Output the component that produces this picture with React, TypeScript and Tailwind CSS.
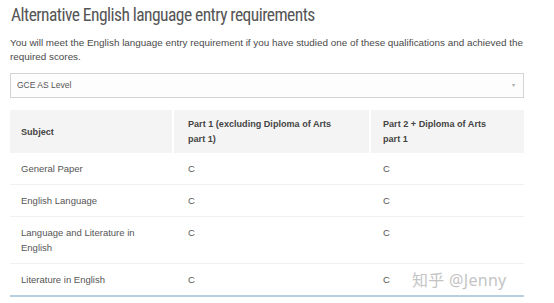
const rows = [
  { subject: "General Paper", p1: "C", p2: "C" },
  { subject: "English Language", p1: "C", p2: "C" },
  { subject: "Language and Literature in English", p1: "C", p2: "C" },
  { subject: "Literature in English", p1: "C", p2: "C" },
];

export default function App() {
  return (
    <div className="relative w-[554px] h-[303px] overflow-hidden bg-white font-['Liberation_Sans',Arial,sans-serif]">
      <div className="pl-[10px] pr-[30px] pt-[2px]">
        <h2 className="font-['Roboto',sans-serif] font-stretch-condensed text-[17.5px] tracking-[-0.55px] leading-[26px] text-[#555] pl-[1px]">
          Alternative English language entry requirements
        </h2>

        <p className="mt-[8px] text-[9.9px] leading-[14px] text-[#4a4a4a]">
          You will meet the English language entry requirement if you have studied one of these qualifications and achieved the required scores.
        </p>

        {/* Select */}
        <div className="mt-[9px] h-[25px] border border-[#d4d4d4] bg-[#fdfdfd] flex items-center justify-between pl-[6px] pr-[8px]">
          <span className="text-[8.5px] text-[#555]">GCE AS Level</span>
          <span className="text-[6px] text-[#aaa]">▾</span>
        </div>

        {/* Table */}
        <div className="mt-[12px] w-[514px]">
          <div className="grid grid-cols-[162px_197px_155px] bg-[#f4f4f4] text-[9.1px] leading-[15px] font-bold text-[#444]">
            <div className="pl-[11px] pt-[7px] pb-[6px] flex items-center">Subject</div>
            <div className="pl-[14px] pr-[25px] pt-[7px] pb-[6px] border-l-2 border-white">Part 1 (excluding Diploma of Arts part 1)</div>
            <div className="pl-[12px] pr-[25px] pt-[7px] pb-[6px] border-l-2 border-white">Part 2 + Diploma of Arts part 1</div>
          </div>
          {rows.map((r, i) => (
            <div
              key={r.subject}
              className={`grid grid-cols-[162px_197px_155px] text-[9.5px] leading-[15px] text-[#555] ${
                i < rows.length - 1 ? "border-b border-[#f1f1f1]" : "border-b-2 border-[#b5d0df]"
              }`}
            >
              <div className="pl-[11px] pr-[20px] py-[8px]">{r.subject}</div>
              <div className="pl-[16px] py-[8px]">{r.p1}</div>
              <div className="pl-[14px] py-[8px]">{r.p2}</div>
            </div>
          ))}
        </div>
      </div>

      {/* Watermark */}
      <div className="absolute left-[412px] top-[268px] text-[16px] leading-[24px] text-[#c4c4c4] font-['Noto_Sans','Noto_Sans_CJK_SC',sans-serif] tracking-[0.3px]">
        知乎 @Jenny
      </div>
    </div>
  );
}
